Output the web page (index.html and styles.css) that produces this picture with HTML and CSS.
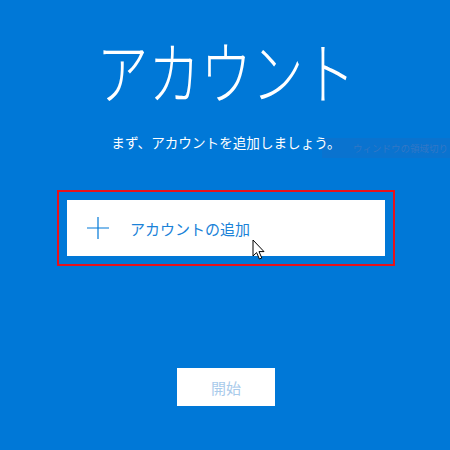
FILE: index.html
```html
<!DOCTYPE html>
<html lang="ja">
<head>
  <meta charset="UTF-8">
  <meta name="viewport" content="width=device-width, initial-scale=1.0">
  <title>アカウント</title>
  <link rel="stylesheet" href="styles.css">
</head>
<body>
  <!-- 薄く残ったツールチップ -->
  <div class="ghost-tip">ウィンドウの領域切り</div>

  <div class="setup">
    <h1 class="title">アカウント</h1>
    <p class="lead">まず、アカウントを追加しましょう。</p>
    <div class="focus-frame">
      <button class="add-account">
        <svg class="plus" width="22" height="22" viewBox="0 0 22 22">
          <path d="M11 0V22M0 11H22" stroke="#0078d7" stroke-width="1.2" fill="none"/>
        </svg>
        <span>アカウントの追加</span>
      </button>
    </div>
    <button class="start" disabled>開始</button>
  </div>

  <!-- マウスカーソル -->
  <svg class="cursor" width="14" height="22" viewBox="0 0 14 22">
    <path d="M1 1V17L4.6 13.6L7.4 20L9.8 19L7 12.6H12Z" fill="#fff" stroke="#000" stroke-width="1" stroke-linejoin="round"/>
  </svg>
</body>
</html>
```

FILE: styles.css
```css
body {
  margin: 0;
  width: 450px;
  height: 450px;
  overflow: hidden;
  background: #0078d7;
  font-family: "Noto Sans CJK JP", "Noto Sans", sans-serif;
  color: #fff;
  position: relative;
}
.setup {
  position: relative;
  display: flex;
  flex-direction: column;
  align-items: center;
  padding-top: 22px;
  padding-left: 2px;
}
.title {
  margin: 0;
  font-size: 68px;
  font-weight: 300;
  line-height: 96px;
  transform: scaleX(0.76);
}
.lead {
  margin: 14px 0 0 0;
  font-size: 13.6px;
  line-height: 20px;
}
.focus-frame {
  margin-top: 38px;
  border: 2px solid #e8111a;
  padding: 8px;
}
.add-account {
  width: 318px;
  height: 56px;
  background: #fff;
  border: none;
  display: flex;
  align-items: center;
  padding: 0 0 0 20px;
  font-family: inherit;
  font-size: 15px;
  color: #1a82d8;
  cursor: pointer;
}
.plus {
  display: block;
  margin-right: 21px;
}
.start {
  margin-top: 102px;
  width: 98px;
  height: 38px;
  background: #fff;
  border: none;
  font-family: inherit;
  font-size: 15px;
  color: #a9cbeb;
}
.ghost-tip {
  position: absolute;
  left: 322px;
  top: 138px;
  width: 97px;
  height: 20px;
  padding-left: 31px;
  background: #0a73cf;
  color: #3277c6;
  font-size: 9.5px;
  line-height: 20px;
  white-space: nowrap;
  overflow: hidden;
}
.cursor {
  position: absolute;
  left: 252px;
  top: 239px;
}
```
